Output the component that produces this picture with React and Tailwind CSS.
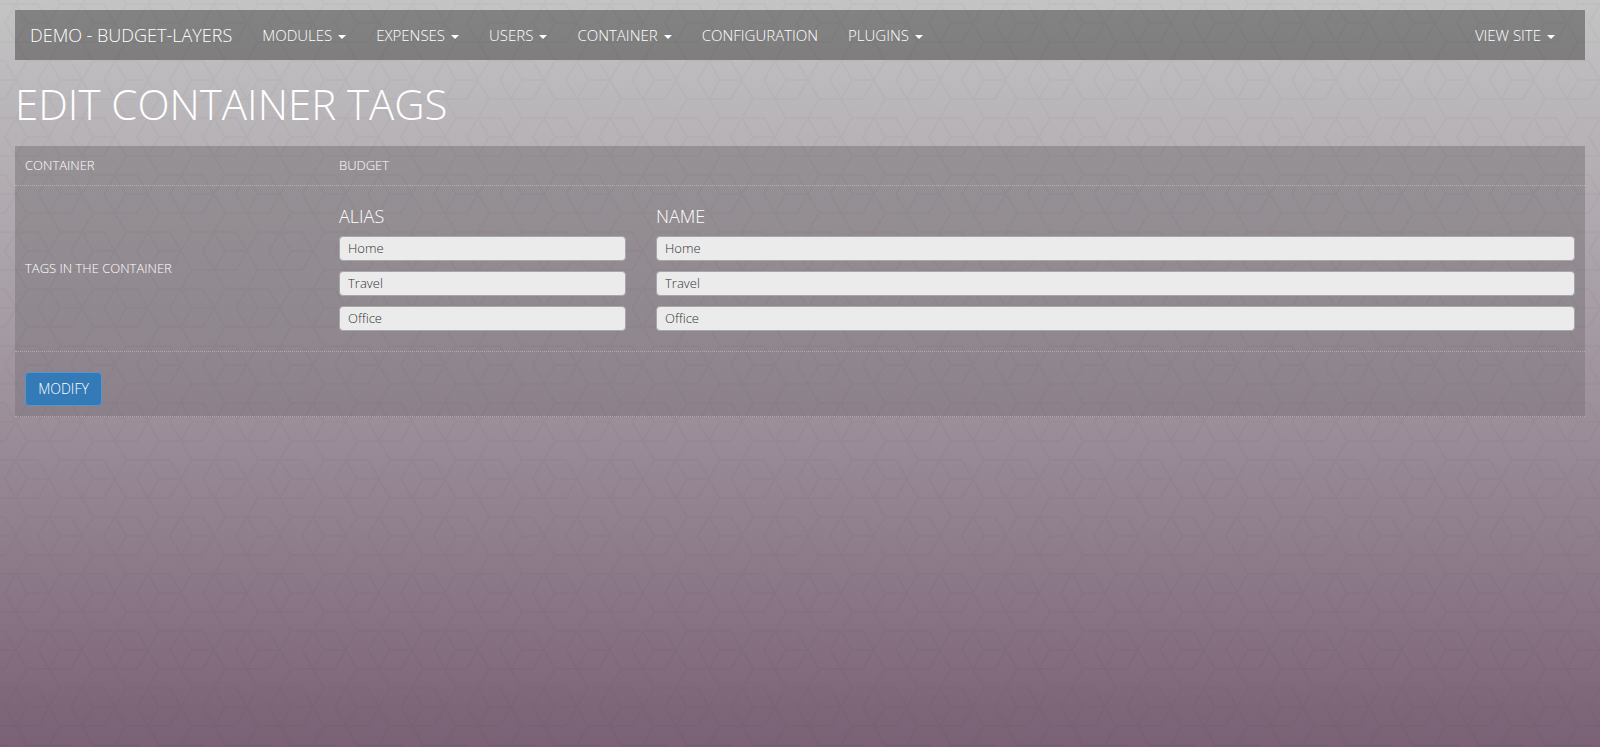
const navItems = [
  ["MODULES", true],
  ["EXPENSES", true],
  ["USERS", true],
  ["CONTAINER", true],
  ["CONFIGURATION", false],
  ["PLUGINS", true],
];

function Caret() {
  return <span className="ml-[6px] inline-block align-middle w-0 h-0 border-t-[4px] border-t-white border-x-[4px] border-x-transparent" />;
}

// Pinwheels on a triangular lattice (side 22, row 19); lattice period (66,0),(33,57).
function weave() {
  const dir = [
    [22, 0],
    [11, 19],
    [-11, 19],
    [-22, 0],
    [-11, -19],
    [11, -19],
  ];
  let d = "";
  for (let j = -2; j < 5; j++) {
    for (let i = -3; i < 4; i++) {
      const cx = 66 * i + 33 * j;
      const cy = 57 * j;
      [0, 2, 4].forEach((k) => {
        const [ax, ay] = dir[k];
        const [bx, by] = dir[(k + 1) % 6];
        d += `M${cx} ${cy}l${2 * ax} ${2 * ay}l${bx} ${by}`;
        const [sx, sy] = [cx + 33, cy + 19];
        d += `M${sx} ${sy}l${ax} ${ay}l${bx} ${by}`;
      });
    }
  }
  return d;
}

function Pattern() {
  return (
    <svg className="absolute inset-0 w-full h-full" aria-hidden="true">
      <defs>
        <pattern id="hex" x="-6" y="4" width="66" height="114" patternUnits="userSpaceOnUse">
          <path d={weave()} fill="none" stroke="#000" strokeOpacity="0.028" strokeWidth="1.6" />
        </pattern>
      </defs>
      <rect width="100%" height="100%" fill="url(#hex)" />
    </svg>
  );
}

function TagInput({ value }) {
  return (
    <input
      readOnly
      value={value}
      className="block w-full h-[25px] rounded-[4px] border border-[#a9a6a9] bg-[#ecebec] px-[8px] pb-[2px] text-[13px] text-[#333] font-light outline-none"
    />
  );
}

function TagColumn({ title, className }) {
  return (
    <div className={className}>
      <div className="text-[18px] leading-[20px] text-white font-light mb-[10px]">{title}</div>
      <div className="flex flex-col gap-[10px]">
        {["Home", "Travel", "Office"].map((t) => (
          <TagInput key={t} value={t} />
        ))}
      </div>
    </div>
  );
}

export default function App() {
  return (
    <div className="relative h-[747px] overflow-hidden bg-gradient-to-b from-[#c4c4c4] via-[#a0959f] to-[#7a6175] font-['Open_Sans',sans-serif] font-light text-white">
      <Pattern />
      <div className="relative px-[15px] pt-[10px]">
        <nav className="flex items-center h-[50px] bg-black/33 pl-[15px] pr-[30px]">
          <span className="text-[18px] leading-none font-light text-white whitespace-nowrap mr-[15px]">DEMO - BUDGET-LAYERS</span>
          {navItems.map(([label, caret]) => (
            <span key={label} className="px-[15px] text-[15px] font-light text-white whitespace-nowrap">
              {label}
              {caret && <Caret />}
            </span>
          ))}
          <span className="ml-auto text-[15px] font-light text-white whitespace-nowrap">
            VIEW SITE
            <Caret />
          </span>
        </nav>

        <h1 className="mt-[20px] text-[42px] leading-[47px] font-light text-white">EDIT CONTAINER TAGS</h1>

        <div className="mt-[19px] bg-gradient-to-b from-black/18 to-black/10 text-[13px]">
          <div className="flex items-center h-[40px] border-b border-dotted border-white/30">
            <div className="w-[324px] pl-[10px]">CONTAINER</div>
            <div>BUDGET</div>
          </div>
          <div className="flex items-center h-[166px] border-b border-dotted border-white/30">
            <div className="w-[324px] pl-[10px]">TAGS IN THE CONTAINER</div>
            <div className="flex-1 flex pr-[10px]">
              <TagColumn title="ALIAS" className="w-[287px]" />
              <TagColumn title="NAME" className="ml-[30px] flex-1" />
            </div>
          </div>
          <div className="h-[65px] border-b border-dotted border-white/30 pl-[10px] pt-[20px]">
            <button className="h-[34px] w-[77px] rounded-[4px] border border-[#5a94cc] bg-[#337ab7] pb-[2px] text-[14px] font-light text-white">
              MODIFY
            </button>
          </div>
        </div>
      </div>
    </div>
  );
}
